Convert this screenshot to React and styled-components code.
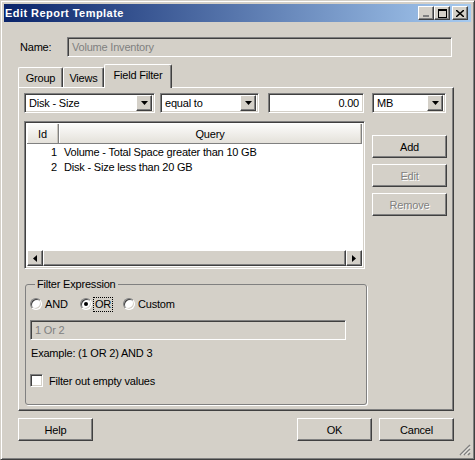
import React from 'react';
import styled, { createGlobalStyle, css } from 'styled-components';

const GlobalStyle = createGlobalStyle`
  * {
    box-sizing: border-box;
  }
  body {
    margin: 0;
    background: #fff;
    font-family: 'Liberation Sans', Arial, sans-serif;
    font-size: 11px;
    letter-spacing: -0.2px;
    color: #000;
  }
`;

const raised = css`
  border: 1px solid;
  border-color: #fff #404040 #404040 #fff;
  box-shadow: inset -1px -1px #808080, inset 1px 1px #d4d0c8;
`;

const sunken = css`
  border: 1px solid;
  border-color: #808080 #fff #fff #808080;
  box-shadow: inset 1px 1px #404040, inset -1px -1px #d4d0c8;
`;

const Window = styled.div`
  position: relative;
  width: 475px;
  height: 460px;
  display: flex;
  flex-direction: column;
  padding: 3px;
  background: #d4d0c8;
  border: 1px solid;
  border-color: #d4d0c8 #404040 #404040 #d4d0c8;
  box-shadow: inset 1px 1px #fff, inset -1px -1px #808080;
`;

const TitleBar = styled.div`
  height: 18px;
  display: flex;
  align-items: center;
  justify-content: space-between;
  padding: 0 3px 0 1px;
  background: linear-gradient(to right, #0a246a, #a6caf0);
`;

const TitleText = styled.span`
  font-weight: 700;
  font-size: 11px;
  color: #fff;
  letter-spacing: 0.45px;
`;

const CaptionButtons = styled.div`
  display: flex;
  align-items: center;
`;

const CaptionButton = styled.div`
  width: 16px;
  height: 14px;
  display: flex;
  align-items: center;
  justify-content: center;
  margin-left: ${(p) => (p.$gap ? '2px' : '0')};
  background: #d4d0c8;
  ${raised}
`;

const Body = styled.div`
  flex: 1;
  display: flex;
  flex-direction: column;
  padding: 15px 17px 0 14px;
`;

const NameRow = styled.div`
  display: flex;
  align-items: center;
  height: 20px;
`;

const NameLabel = styled.span`
  width: 49px;
  padding-left: 2px;
`;

const Field = styled.div`
  width: ${(p) => p.$w}px;
  height: 20px;
  display: flex;
  align-items: center;
  justify-content: ${(p) => (p.$right ? 'flex-end' : 'flex-start')};
  padding: 0 ${(p) => (p.$right ? '4px' : '2px')} 0 4px;
  margin-left: ${(p) => p.$ml || 0}px;
  margin-top: ${(p) => p.$mt || 0}px;
  background: ${(p) => (p.$disabled ? '#d4d0c8' : '#fff')};
  color: ${(p) => (p.$disabled ? '#808080' : '#000')};
  ${sunken}
`;

const TabStrip = styled.div`
  display: flex;
  align-items: flex-end;
  height: 23px;
  margin-top: 7px;
`;

const Tab = styled.div`
  position: relative;
  z-index: ${(p) => (p.$active ? 1 : 0)};
  width: ${(p) => p.$w}px;
  height: ${(p) => (p.$active ? 24 : 20)}px;
  margin-bottom: ${(p) => (p.$active ? -1 : 0)}px;
  display: flex;
  align-items: center;
  justify-content: center;
  padding-bottom: ${(p) => (p.$active ? 3 : 0)}px;
  background: #d4d0c8;
  border-top: 1px solid #fff;
  border-left: 1px solid #fff;
  border-right: 1px solid #404040;
  border-radius: 2px 2px 0 0;
  box-shadow: inset -1px 0 #808080;
`;

const Panel = styled.div`
  width: 436px;
  height: 324px;
  display: flex;
  flex-direction: column;
  padding: 5px 0 0 5px;
  border: 1px solid;
  border-color: #fff #404040 #404040 #fff;
  box-shadow: inset -1px -1px #808080;
`;

const FilterRow = styled.div`
  display: flex;
  gap: 5px;
`;

const Combo = styled.div`
  width: ${(p) => p.$w}px;
  height: 20px;
  display: flex;
  align-items: center;
  justify-content: space-between;
  padding: 2px 2px 2px 4px;
  margin-left: ${(p) => p.$ml || 0}px;
  background: #fff;
  ${sunken}
`;

const DropButton = styled.div`
  width: 16px;
  height: 16px;
  display: flex;
  align-items: center;
  justify-content: center;
  background: #d4d0c8;
  ${raised}
`;

const ListRow = styled.div`
  display: flex;
  gap: 7px;
  margin-top: 8px;
`;

const ListView = styled.div`
  width: 341px;
  height: 148px;
  display: flex;
  flex-direction: column;
  padding: 2px;
  background: #fff;
  ${sunken}
`;

const HeaderRow = styled.div`
  display: flex;
  height: 20px;
`;

const HeaderCell = styled.div`
  width: ${(p) => (p.$w ? `${p.$w}px` : 'auto')};
  flex: ${(p) => (p.$w ? 'none' : 1)};
  display: flex;
  align-items: center;
  justify-content: center;
  background: linear-gradient(#fcfcfb, #e4e1da);
  border-right: 1px solid #808080;
  border-bottom: 1px solid #808080;
  box-shadow: inset 1px 0 #fff, inset -1px 0 #c8c4bb;
`;

const DataRow = styled.div`
  display: flex;
  height: 15px;
  align-items: center;
`;

const IdCell = styled.span`
  width: 32px;
  text-align: right;
  padding-right: 2px;
`;

const QueryCell = styled.span`
  padding-left: 5px;
`;

const ScrollBar = styled.div`
  display: flex;
  height: 16px;
  margin-top: auto;
`;

const ScrollArrow = styled.div`
  width: 16px;
  height: 16px;
  display: flex;
  align-items: center;
  justify-content: center;
  background: #d4d0c8;
  ${raised}
`;

const ScrollThumb = styled.div`
  flex: 1;
  background: #d4d0c8;
  ${raised}
`;

const ButtonColumn = styled.div`
  display: flex;
  flex-direction: column;
  gap: 6px;
  margin-top: 14px;
`;

const Button = styled.div`
  width: 75px;
  height: 23px;
  display: flex;
  align-items: center;
  justify-content: center;
  background: #d4d0c8;
  color: ${(p) => (p.$disabled ? '#808080' : '#000')};
  text-shadow: ${(p) => (p.$disabled ? '1px 1px #fff' : 'none')};
  ${raised}
`;

const GroupBox = styled.fieldset`
  width: 342px;
  height: 127px;
  margin: 9px 0 0 1px;
  padding: 6px 4px 0 4px;
  border: 1px solid #808080;
  border-radius: 3px;
  box-shadow: 1px 1px 0 #fff;
`;

const Legend = styled.legend`
  margin-left: 5px;
  padding: 0 2px;
  line-height: 13px;
`;

const RadioRow = styled.div`
  display: flex;
  align-items: center;
  height: 14px;
`;

const RadioOption = styled.label`
  display: flex;
  align-items: center;
  width: ${(p) => (p.$w ? `${p.$w}px` : 'auto')};
`;

const RadioCircle = styled.span`
  width: 12px;
  height: 12px;
  display: flex;
  align-items: center;
  justify-content: center;
  margin-right: 2px;
  border-radius: 50%;
  background: #fff;
  border: 1px solid;
  border-color: #808080 #fff #fff #808080;
  box-shadow: inset 1px 1px #404040, inset -1px -1px #d4d0c8;
`;

const RadioDot = styled.span`
  width: 4px;
  height: 4px;
  border-radius: 50%;
  background: #000;
`;

const RadioText = styled.span`
  padding: 0 1px;
  outline: ${(p) => (p.$focus ? '1px dotted #000' : 'none')};
  line-height: 13px;
`;

const ExampleText = styled.div`
  height: 13px;
  line-height: 13px;
  margin: 7px 0 0 1px;
`;

const CheckRow = styled.label`
  display: flex;
  align-items: center;
  gap: 6px;
  margin-top: 14px;
`;

const CheckBox = styled.span`
  width: 13px;
  height: 13px;
  background: #fff;
  ${sunken}
`;

const Footer = styled.div`
  display: flex;
  gap: 7px;
  margin-top: 7px;
`;

const Spacer = styled.div`
  flex: 1;
`;

const Grip = styled.svg`
  position: absolute;
  right: 3px;
  bottom: 3px;
`;

const Tri = ({ dir = 'down' }) => {
  const pts = {
    down: '0,0 7,0 3.5,4',
    left: '4,0 4,7 0,3.5',
    right: '0,0 0,7 4,3.5',
  }[dir];
  const w = dir === 'down' ? 7 : 4;
  const h = dir === 'down' ? 4 : 7;
  return (
    <svg width={w} height={h} viewBox={`0 0 ${w} ${h}`}>
      <polygon points={pts} fill="#000" />
    </svg>
  );
};

const rows = [
  { id: 1, q: 'Volume - Total Space greater than 10 GB' },
  { id: 2, q: 'Disk - Size less than 20 GB' },
];

export default function App() {
  return (
    <>
      <GlobalStyle />
      <Window>
        <TitleBar>
          <TitleText>Edit Report Template</TitleText>
          <CaptionButtons>
            <CaptionButton>
              <svg width="8" height="8" viewBox="0 0 8 8">
                <rect x="1" y="6" width="6" height="2" fill="#808080" />
              </svg>
            </CaptionButton>
            <CaptionButton>
              <svg width="9" height="9" viewBox="0 0 9 9">
                <rect x="0.5" y="0.5" width="8" height="8" fill="none" stroke="#000" />
                <rect x="0" y="0" width="9" height="2" fill="#000" />
              </svg>
            </CaptionButton>
            <CaptionButton $gap>
              <svg width="8" height="7" viewBox="0 0 8 7">
                <path d="M0 0 L8 7 M8 0 L0 7" stroke="#000" strokeWidth="1.5" />
              </svg>
            </CaptionButton>
          </CaptionButtons>
        </TitleBar>

        <Body>
          <NameRow>
            <NameLabel>Name:</NameLabel>
            <Field $w={385} $disabled>Volume Inventory</Field>
          </NameRow>

          <TabStrip>
            <Tab $w={45}>Group</Tab>
            <Tab $w={41}>Views</Tab>
            <Tab $w={68} $active>Field Filter</Tab>
          </TabStrip>

          <Panel>
            <FilterRow>
              <Combo $w={131}>
                Disk - Size
                <DropButton><Tri /></DropButton>
              </Combo>
              <Combo $w={99}>
                equal to
                <DropButton><Tri /></DropButton>
              </Combo>
              <Field $w={96} $ml={4} $right>0.00</Field>
              <Combo $w={74} $ml={3}>
                MB
                <DropButton><Tri /></DropButton>
              </Combo>
            </FilterRow>

            <ListRow>
              <ListView>
                <HeaderRow>
                  <HeaderCell $w={32}>Id</HeaderCell>
                  <HeaderCell>Query</HeaderCell>
                </HeaderRow>
                {rows.map((r) => (
                  <DataRow key={r.id}>
                    <IdCell>{r.id}</IdCell>
                    <QueryCell>{r.q}</QueryCell>
                  </DataRow>
                ))}
                <ScrollBar>
                  <ScrollArrow><Tri dir="left" /></ScrollArrow>
                  <ScrollThumb />
                  <ScrollArrow><Tri dir="right" /></ScrollArrow>
                </ScrollBar>
              </ListView>
              <ButtonColumn>
                <Button>Add</Button>
                <Button $disabled>Edit</Button>
                <Button $disabled>Remove</Button>
              </ButtonColumn>
            </ListRow>

            <GroupBox>
              <Legend>Filter Expression</Legend>
              <RadioRow>
                <RadioOption $w={50}>
                  <RadioCircle />
                  <RadioText>AND</RadioText>
                </RadioOption>
                <RadioOption $w={43}>
                  <RadioCircle><RadioDot /></RadioCircle>
                  <RadioText $focus>OR</RadioText>
                </RadioOption>
                <RadioOption>
                  <RadioCircle />
                  <RadioText>Custom</RadioText>
                </RadioOption>
              </RadioRow>
              <Field $w={316} $mt={9} $disabled>1 Or 2</Field>
              <ExampleText>Example: (1 OR 2) AND 3</ExampleText>
              <CheckRow>
                <CheckBox />
                Filter out empty values
              </CheckRow>
            </GroupBox>
          </Panel>

          <Footer>
            <Button>Help</Button>
            <Spacer />
            <Button>OK</Button>
            <Button>Cancel</Button>
          </Footer>
        </Body>

        <Grip width="12" height="12" viewBox="0 0 12 12">
          <path d="M11 1 L1 11 M11 5 L5 11 M11 9 L9 11" stroke="#808080" strokeWidth="1.5" />
          <path d="M11 2.5 L2.5 11 M11 6.5 L6.5 11" stroke="#fff" strokeWidth="0.8" />
        </Grip>
      </Window>
    </>
  );
}
